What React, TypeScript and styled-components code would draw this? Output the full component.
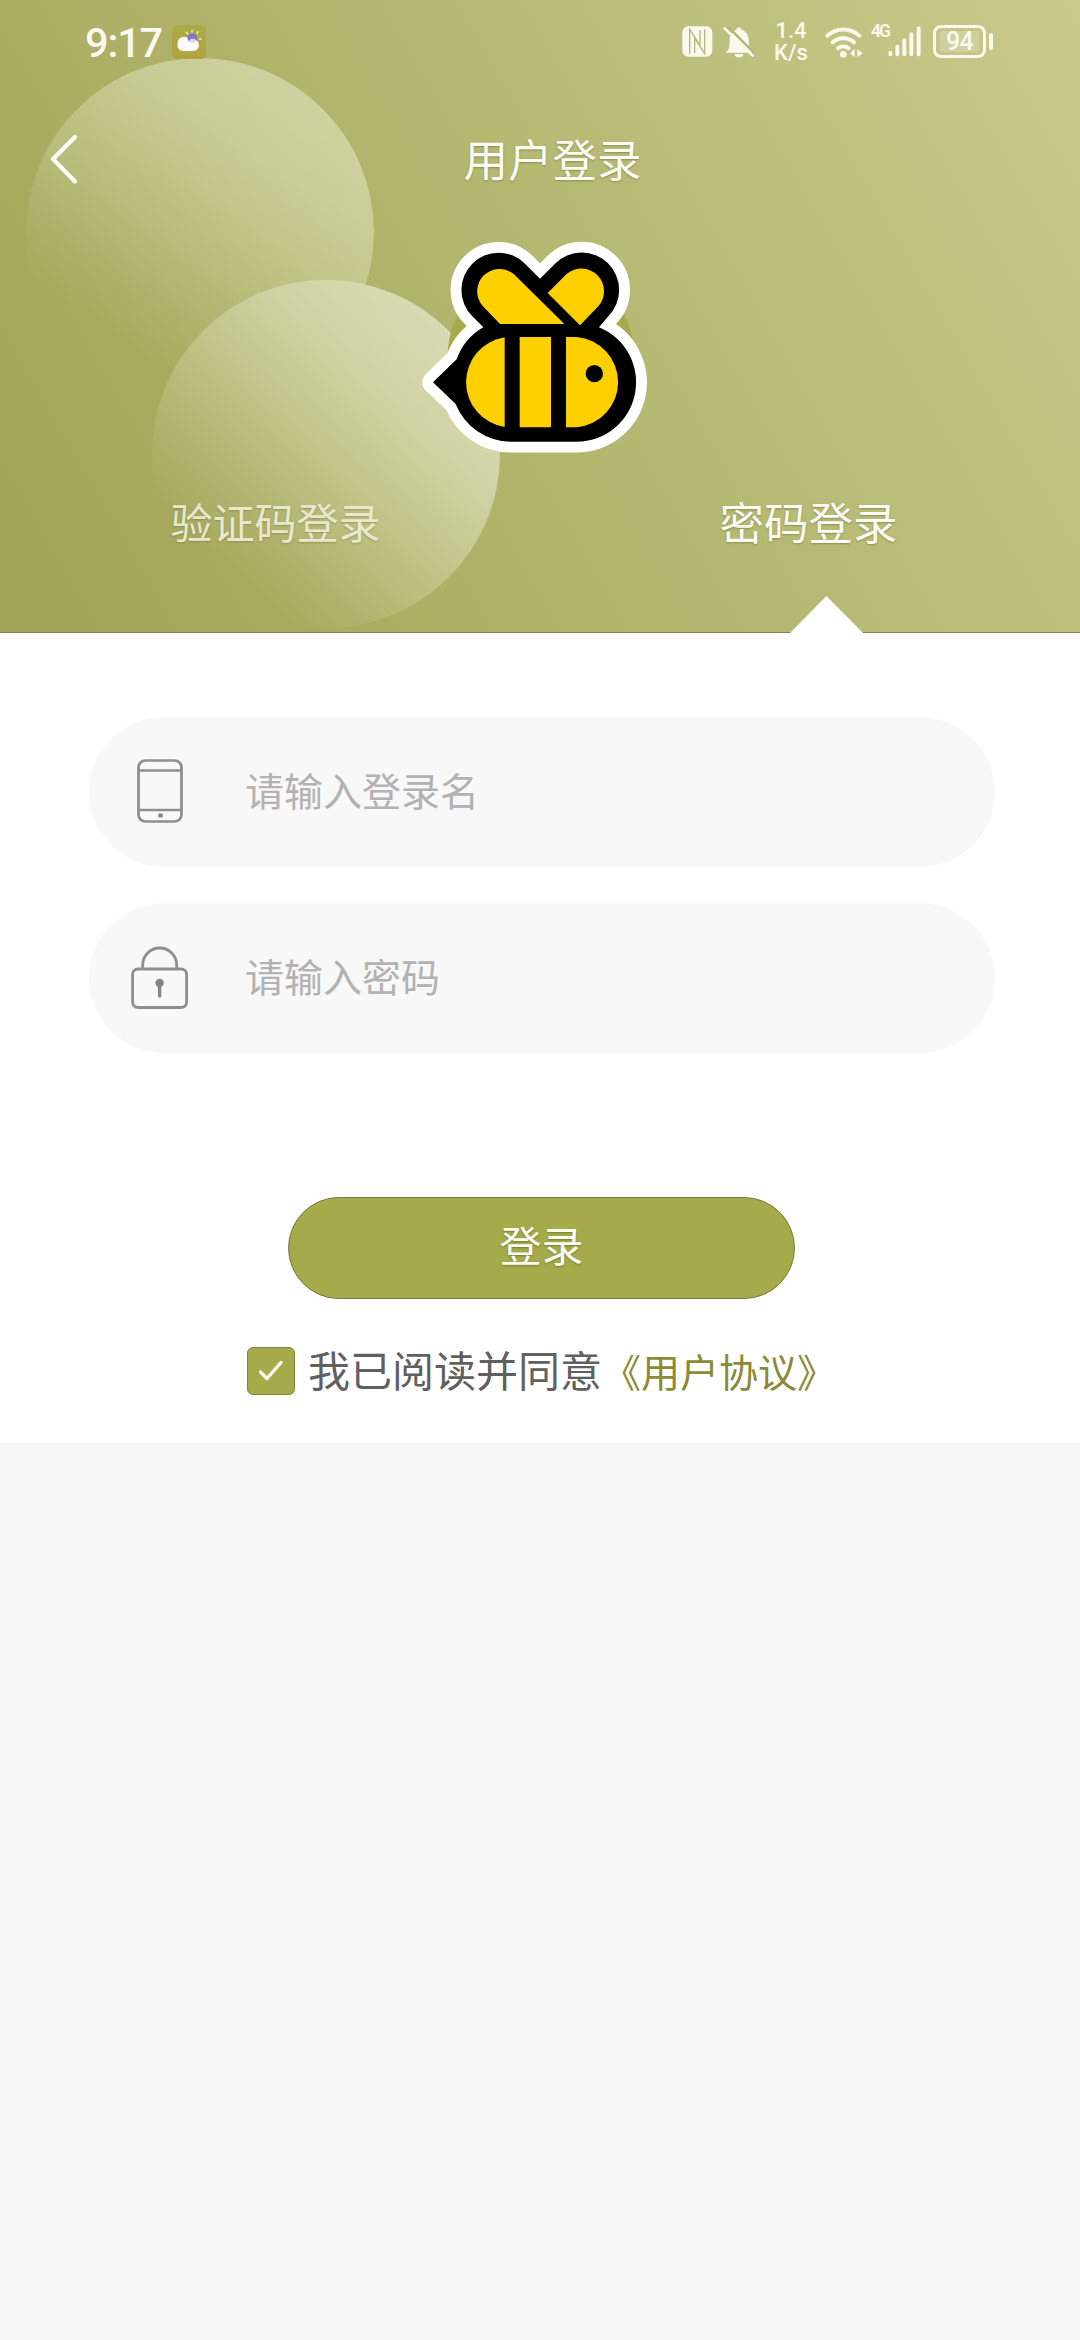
import React from "react";
import styled, { createGlobalStyle } from "styled-components";

const GlobalStyle = createGlobalStyle`
  * { box-sizing: border-box; }
  body {
    margin: 0;
    background: #f6f6f6;
    font-family: "Noto Sans CJK SC", "Noto Sans", sans-serif;
  }
`;

const Page = styled.div`
  width: 1080px;
  min-height: 2340px;
  background: #f6f6f6;
`;

const Header = styled.header`
  position: relative;
  isolation: isolate;
  display: flex;
  flex-direction: column;
  height: 633px;
  border-bottom: 1px solid #857f55;
  background: linear-gradient(60deg, #a1a456 0%, #a8ab5f 20%, #b4b76f 50%, #bec07d 75%, #caca8c 100%);
`;

const Bubble = styled.div<{ $x: number; $y: number; $fill: string; $mask?: string }>`
  position: absolute;
  z-index: -1;
  left: ${(p) => p.$x}px;
  top: ${(p) => p.$y}px;
  width: 348px;
  height: 348px;
  border-radius: 50%;
  background: ${(p) => p.$fill};
  mask-image: ${(p) => p.$mask ?? "none"};
`;

const StatusBar = styled.div`
  display: flex;
  justify-content: space-between;
  height: 84px;
  padding: 0 87px 0 85px;
  color: #fbf8f0;
`;

const StatusGroup = styled.div`
  display: flex;
  align-items: center;
  height: 83px;
`;

const Clock = styled.span`
  width: 87px;
  padding-top: 2px;
  font: 500 41.5px/84px Roboto, sans-serif;
  letter-spacing: -1.2px;
`;

const Speed = styled.div`
  display: grid;
  grid-template-rows: 21.5px 21.5px;
  width: 40px;
  margin: 0 14px 0 17px;
  text-align: center;
  white-space: nowrap;
`;

const SpeedLine = styled.div`
  font: 500 22px/21.5px Roboto, sans-serif;
`;

const Spacer = styled.span<{ $w: number }>`
  flex: 0 0 ${(p) => p.$w}px;
`;

const Network = styled.span`
  align-self: flex-start;
  width: 17px;
  margin-top: 23px;
  font: 600 17.5px/17px Roboto, sans-serif;
  letter-spacing: -2px;
  white-space: nowrap;
`;

const Battery = styled.span`
  display: grid;
  place-items: center;
  width: 53px;
  height: 33px;
  border: 3px solid #fbf8f0;
  border-radius: 8px;
`;

const BatteryLevel = styled.span`
  width: 39px;
  height: 21px;
  border-radius: 2px;
  background: #d0d09f;
  font: 500 25px/22px Roboto, sans-serif;
  letter-spacing: -0.6px;
  text-align: center;
`;

const BatteryTip = styled.span`
  width: 4px;
  height: 17px;
  margin-left: 3px;
  border-radius: 2px;
  background: #fbf8f0;
`;

const NavBar = styled.nav`
  display: grid;
  grid-template-columns: 104px 1fr 79px;
  align-items: center;
  height: 148px;
  margin-bottom: -12px;
`;

const BackButton = styled.button`
  display: flex;
  align-items: center;
  width: 104px;
  height: 148px;
  padding: 2px 0 0 47px;
  border: 0;
  background: none;
`;

const Title = styled.h1`
  margin: 0;
  color: #fcfaf5;
  font-size: 44.5px;
  font-weight: 400;
  line-height: 60px;
  text-align: center;
  text-shadow: 0 1px 2px rgba(90, 85, 30, 0.45);
`;

const LogoRow = styled.div`
  display: flex;
  height: 250px;
  padding-left: 400px;
`;

const Tabs = styled.div`
  display: grid;
  grid-template-columns: 551px 515px;
  margin-top: 19px;
`;

const Tab = styled.button<{ $active?: boolean }>`
  height: 64px;
  padding: 0;
  border: 0;
  background: none;
  color: ${(p) => (p.$active ? "#fcfaf5" : "#e9e8cf")};
  font: 400 ${(p) => (p.$active ? 44.5 : 42)}px/64px "Noto Sans CJK SC", sans-serif;
  text-align: center;
  text-shadow: 0 1px 2px rgba(90, 85, 30, ${(p) => (p.$active ? 0.45 : 0.35)});
`;

const TabArrow = styled.div`
  position: absolute;
  left: 790px;
  bottom: -1px;
  width: 73px;
  height: 37px;
  background: #fff;
  clip-path: polygon(50% 0, 100% 100%, 0 100%);
`;

const Panel = styled.form`
  display: flex;
  flex-direction: column;
  height: 810px;
  padding: 84px 85px 0 89px;
  background: #fff;
`;

const Field = styled.label`
  display: flex;
  align-items: center;
  height: 150px;
  margin-bottom: 36px;
  border-radius: 75px;
  background: #f8f8f8;
`;

const FieldIcon = styled.span<{ $lift?: number }>`
  display: flex;
  width: 156px;
  padding: 0 0 ${(p) => p.$lift ?? 0}px 40px;
`;

const Input = styled.input`
  flex: 1;
  min-width: 0;
  height: 80px;
  margin-bottom: 7px;
  padding: 0;
  border: 0;
  outline: 0;
  background: none;
  color: #555;
  font: 400 39px/80px "Noto Sans CJK SC", sans-serif;
  &::placeholder { color: #b2b2b2; opacity: 1; }
`;

const SubmitButton = styled.button`
  width: 507px;
  height: 102px;
  margin: 108px 0 0 199px;
  padding: 0 0 8px;
  border: 1px solid #7d7840;
  border-radius: 51px;
  background: #a5aa4b;
  color: #fdfaf2;
  font: 400 42px/60px "Noto Sans CJK SC", sans-serif;
  text-shadow: 0 1px 2px rgba(80, 75, 20, 0.5);
`;

const Agreement = styled.div`
  display: flex;
  align-items: center;
  height: 60px;
  margin: 42px 0 0 158px;
  white-space: nowrap;
`;

const Checkbox = styled.span`
  display: grid;
  place-items: center;
  width: 48px;
  height: 48px;
  margin-right: 13px;
  border: 1px solid #86813f;
  border-radius: 6px;
  background: #a5aa4b;
`;

const AgreementText = styled.span`
  padding-bottom: 5px;
  color: #606060;
  font-size: 42px;
  line-height: 60px;
`;

const AgreementLink = styled.a`
  padding-bottom: 3px;
  color: #8b8a36;
  font-size: 39px;
  line-height: 60px;
`;

const WeatherIcon = () => (
  <svg width="34" height="34" viewBox="0 0 102 102">
    <defs>
      <linearGradient id="weatherTile" x1="0" y1="0" x2="0" y2="1">
        <stop offset="0" stopColor="#a9ac48" />
        <stop offset="1" stopColor="#b3a23f" />
      </linearGradient>
    </defs>
    <rect width="102" height="102" rx="16" fill="url(#weatherTile)" />
    <g stroke="#efe6c0" strokeWidth="4.5" strokeLinecap="round">
      <path d="M60 16v5M78 20l-3 6M43 22l4 5M87 42h-5" />
    </g>
    <rect x="16" y="43" width="65" height="35" rx="17.5" fill="#fdfbfb" />
    <circle cx="36" cy="54" r="19" fill="#fdfbfb" />
    <circle cx="61" cy="39" r="14.5" fill="#8278c8" />
    <path d="M50 50a13 13 0 0 1 25 2v10H50Z" fill="#fdfbfb" opacity=".7" />
  </svg>
);

const NfcIcon = () => (
  <svg width="31" height="31" viewBox="0 0 93 93">
    <rect x="1" y="1" width="90" height="91" rx="18" fill="#fbf8f0" />
    <path d="M23 83V10L54 58V12M38 81V36L68 83V10" fill="none" stroke="#b9b876" strokeWidth="4" />
  </svg>
);

const MutedBellIcon = () => (
  <svg width="31" height="32" viewBox="0 0 93 96">
    <path d="M8 80c12-9 11-20 12-38 1-19 10-28 20-31 4-10 12-10 16 0 12 4 21 15 21 32 1 18 2 27 12 37Z" fill="#fbf8f0" />
    <path d="M35 84h26a13 10 0 0 1-26 0Z" fill="#fbf8f0" />
    <path d="M14 1 92 79" stroke="#b6b66f" strokeWidth="7" />
    <path d="M5 7 89 89" stroke="#fbf8f0" strokeWidth="8" strokeLinecap="round" />
  </svg>
);

const WifiIcon = () => (
  <svg width="38" height="32" viewBox="0 0 114 96">
    <g fill="none" stroke="#fbf8f0" strokeWidth="12" strokeLinecap="round">
      <path d="M7 29a72 72 0 0 1 96 0" />
      <path d="M23 49a48 48 0 0 1 64 0" />
      <path d="M39 67a25 25 0 0 1 32 0" />
    </g>
    <circle cx="55" cy="85" r="10" fill="#fbf8f0" />
    <path d="M75 82l14-14v26ZM113 82L97 70v24Z" fill="#fbf8f0" />
  </svg>
);

const SignalIcon = () => (
  <svg width="33" height="31" viewBox="0 0 99 93">
    <g stroke="#fbf8f0" strokeWidth="12" strokeLinecap="round">
      <path d="M7 85v-5M28 85V62M49 85V43M70 85V25M92 85V7" />
    </g>
  </svg>
);

const BackIcon = () => (
  <svg width="32" height="52" viewBox="0 0 32 52">
    <path d="M28 4 6 26l22 22.5" fill="none" stroke="#fdfbf6" strokeWidth="4.4" strokeLinecap="round" strokeLinejoin="round" />
  </svg>
);

const beeOutline =
  "M99 487 170 418A178 178 0 0 1 250 322L217 289A110 110 0 1 1 375 131L420 176 465 131A112 112 0 1 1 625 289L597 322A178 178 0 0 1 530 665H332A178 178 0 0 1 167 552Z";

const BeeLogo = () => (
  <svg width="280" height="250" viewBox="0 0 840 750">
    <circle cx="423" cy="410" r="280" fill="#a5ab4b" />
    <path d={beeOutline} fill="#fff" stroke="#fff" strokeWidth="65" strokeLinejoin="round" />
    <path d={beeOutline} fill="#000" />
    <g fill="#ffd000">
      <path d="M300 312 248 258A67 67 0 0 1 342 163L493 312Z" />
      <path d="M540 316 443 219 499 163A68 68 0 0 1 595 259Z" />
      <path d="M314 352V621A136 136 0 0 1 314 352Z" />
      <path d="M359 351h94v271h-94Z" />
      <path d="M498 351h32A136 136 0 0 1 530 622H498Z" />
    </g>
    <circle cx="583" cy="461" r="26" fill="#000" />
  </svg>
);

const PhoneIcon = () => (
  <svg width="60" height="64" viewBox="0 0 60 64">
    <g fill="none" stroke="#8e8e8e" strokeWidth="2.7">
      <rect x="9.5" y="1.5" width="43" height="61" rx="7" />
      <path d="M9.5 11.5h43M9.5 51h43" />
    </g>
    <rect x="29.3" y="54.5" width="4.5" height="4" rx="1" fill="#858585" />
  </svg>
);

const LockIcon = () => (
  <svg width="60" height="64" viewBox="0 0 60 64">
    <g fill="none" stroke="#8e8e8e" strokeWidth="2.8">
      <rect x="3.6" y="23" width="54" height="38.5" rx="5.5" />
      <path d="M13.7 23V19a17 17 0 0 1 34 0v4" />
    </g>
    <circle cx="30.6" cy="37" r="4.2" fill="#858585" />
    <path d="M30.6 38v12" stroke="#858585" strokeWidth="3.4" strokeLinecap="round" />
  </svg>
);

const CheckIcon = () => (
  <svg width="26" height="22" viewBox="0 0 26 22">
    <path d="M2.5 12 9 18.5 23 2.5" fill="none" stroke="#fdfaf2" strokeWidth="3.4" strokeLinecap="round" strokeLinejoin="round" />
  </svg>
);

export default function App() {
  return (
    <Page>
      <GlobalStyle />
      <Header>
        <Bubble
          $x={26}
          $y={58}
          $fill="linear-gradient(214deg, rgba(255,255,245,.4) 10%, rgba(255,255,240,.34) 30%, rgba(255,255,235,.21) 50%, rgba(255,255,235,.06) 68%, rgba(255,255,235,0) 78%)"
          $mask="radial-gradient(circle at 300px 396px, transparent 173px, #000 174px)"
        />
        <Bubble
          $x={152}
          $y={280}
          $fill="linear-gradient(222deg, rgba(255,255,250,.52) 12%, rgba(255,255,245,.42) 33%, rgba(255,255,240,.25) 52%, rgba(255,255,235,.08) 70%, rgba(255,255,235,0) 80%)"
        />
        <StatusBar>
          <StatusGroup>
            <Clock>9:17</Clock>
            <WeatherIcon />
          </StatusGroup>
          <StatusGroup>
            <NfcIcon />
            <Spacer $w={10} />
            <MutedBellIcon />
            <Speed>
              <SpeedLine>1.4</SpeedLine>
              <SpeedLine>K/s</SpeedLine>
            </Speed>
            <WifiIcon />
            <Spacer $w={8} />
            <Network>4G</Network>
            <SignalIcon />
            <Spacer $w={12} />
            <Battery>
              <BatteryLevel>94</BatteryLevel>
            </Battery>
            <BatteryTip />
          </StatusGroup>
        </StatusBar>
        <NavBar>
          <BackButton type="button" aria-label="返回">
            <BackIcon />
          </BackButton>
          <Title>用户登录</Title>
        </NavBar>
        <LogoRow>
          <BeeLogo />
        </LogoRow>
        <Tabs>
          <Tab type="button">验证码登录</Tab>
          <Tab type="button" $active>
            密码登录
          </Tab>
        </Tabs>
        <TabArrow />
      </Header>
      <Panel>
        <Field>
          <FieldIcon $lift={3}>
            <PhoneIcon />
          </FieldIcon>
          <Input type="text" placeholder="请输入登录名" />
        </Field>
        <Field>
          <FieldIcon>
            <LockIcon />
          </FieldIcon>
          <Input type="password" placeholder="请输入密码" />
        </Field>
        <SubmitButton type="button">登录</SubmitButton>
        <Agreement>
          <Checkbox>
            <CheckIcon />
          </Checkbox>
          <AgreementText>我已阅读并同意</AgreementText>
          <AgreementLink>《用户协议》</AgreementLink>
        </Agreement>
      </Panel>
    </Page>
  );
}
